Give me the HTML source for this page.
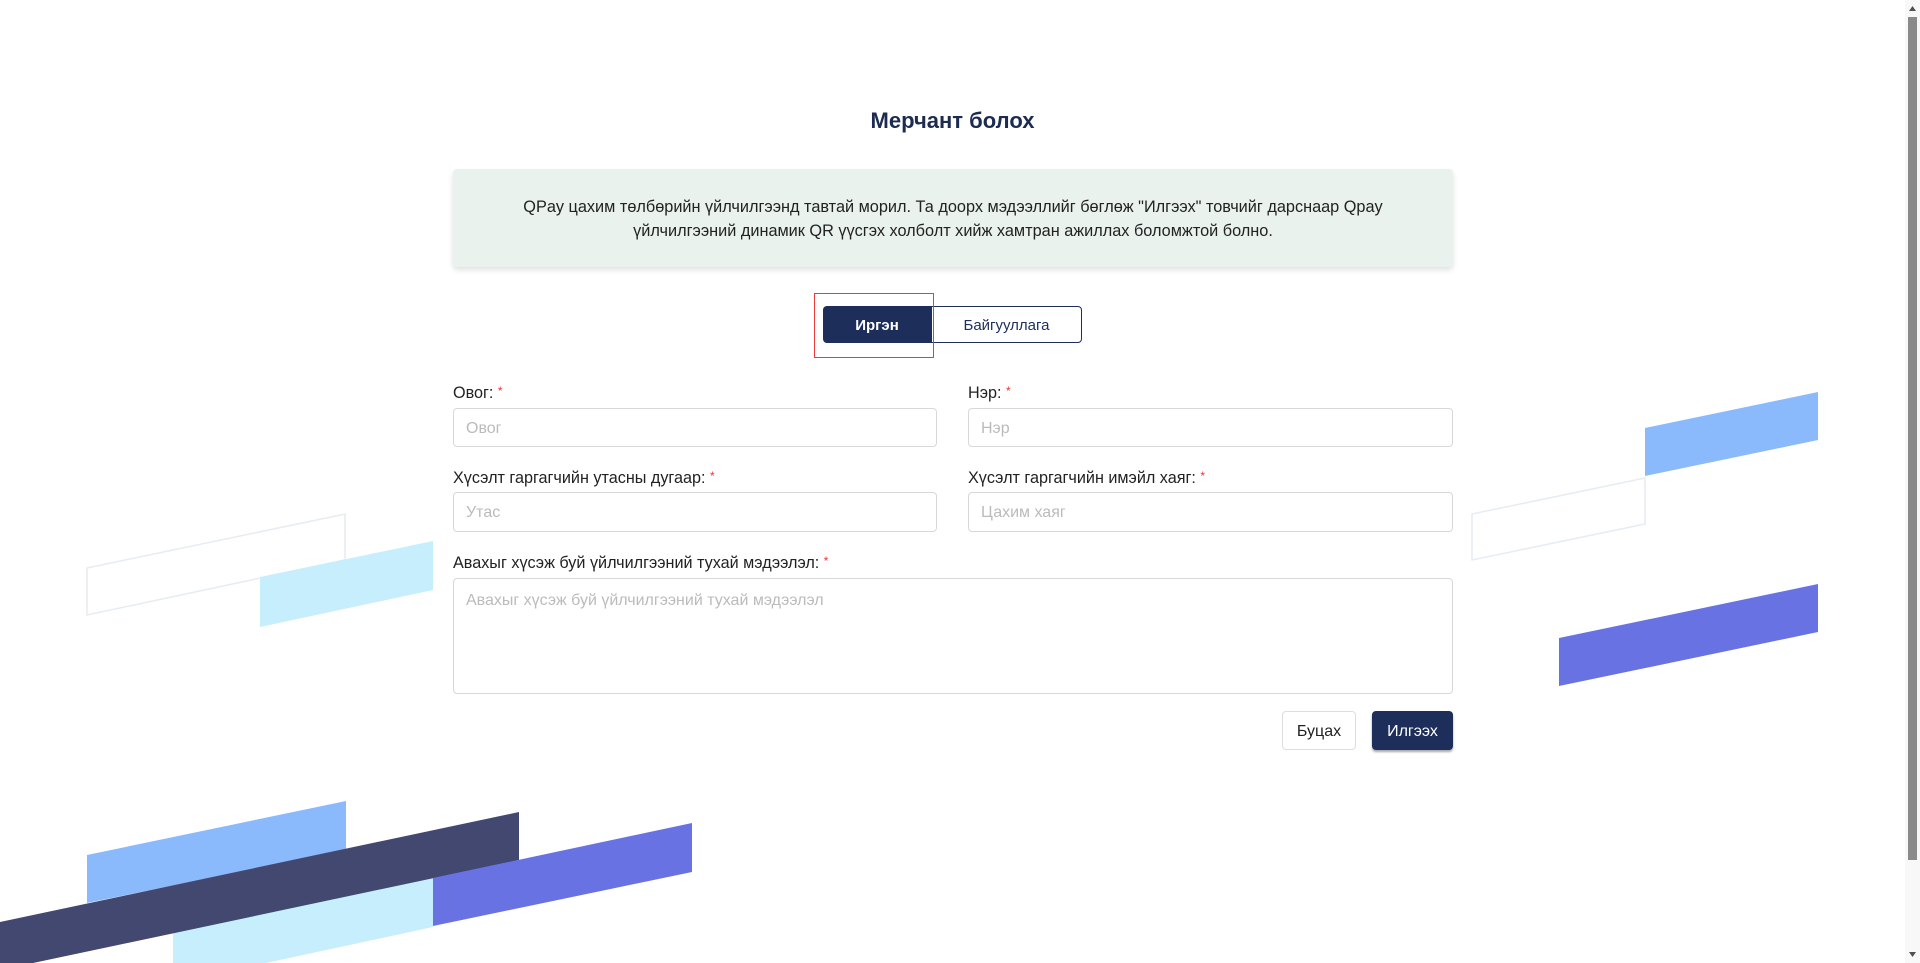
<!DOCTYPE html>
<html><head><meta charset="utf-8"><style>
*{box-sizing:border-box;margin:0;padding:0}
html,body{width:1920px;height:963px;overflow:hidden;background:#fff;font-family:"Liberation Sans",sans-serif;color:#222}
.abs{position:absolute}
h1{position:absolute;left:0;width:1905px;top:108px;text-align:center;font-size:22px;font-weight:bold;color:#1c2b50}
.info{left:453px;top:169px;width:1000px;height:98px;background:#eaf2ed;border-radius:4px;box-shadow:0 3px 6px rgba(0,0,0,.12);text-align:center;font-size:16.3px;line-height:24px;padding-top:26px;color:#222}
.tog{top:306px;height:37px;font-size:15px;display:flex;align-items:center;justify-content:center;border-radius:4px;padding-top:2px}
.lbl{font-size:16.2px;font-weight:500;color:#222}
.lbl span{color:#e33;font-size:12px;vertical-align:top}
.inp{border:1px solid #d8d8d8;border-radius:4px;font-size:16px;color:#bbb;padding:2px 12px 0;display:flex;align-items:center}
.btn{top:711px;height:39px;border-radius:4px;font-size:16px;display:flex;align-items:center;justify-content:center;padding-top:2px}
</style></head><body>
<svg class="abs" style="left:0;top:0" width="1920" height="963">
<polygon points="87,568 345,514 345,560 87,615" fill="none" stroke="#e6ecf3" stroke-width="1.5"/>
<polygon points="260,577 433,541 433,590 260,627" fill="#c6eefc"/>
<polygon points="87,855 346,801 346,850 87,903" fill="#8abafc"/>
<polygon points="173,933 433,878 433,927 173,983" fill="#c6eefc"/>
<polygon points="0,922 519,812 519,860 0,970" fill="#424870"/>
<polygon points="433,878 692,823 692,872 433,926" fill="#6872e2"/>
<polygon points="1645,428 1818,392 1818,440 1645,476" fill="#8abafc"/>
<polygon points="1472,514 1645,478 1645,524 1472,560" fill="none" stroke="#e6ecf3" stroke-width="1.5"/>
<polygon points="1559,638 1818,584 1818,632 1559,686" fill="#6872e2"/>
<rect x="1905" y="0" width="15" height="963" fill="#f8f8f8"/>
<rect x="1908" y="17" width="9" height="843" fill="#8a8a8a"/>
<polygon points="1912.5,6 1909,11 1916,11" fill="#505050"/>
<polygon points="1912.5,957 1909,952 1916,952" fill="#505050"/>
</svg>
<h1>Мерчант болох</h1>
<div class="abs info">QPay цахим төлбөрийн үйлчилгээнд тавтай морил. Та доорх мэдээллийг бөглөж "Илгээх" товчийг дарснаар Qpay<br>үйлчилгээний динамик QR үүсгэх холболт хийж хамтран ажиллах боломжтой болно.</div>
<div class="abs tog" style="left:823px;width:108px;background:#1c2e59;color:#fff;font-weight:bold;border-radius:4px 0 0 4px">Иргэн</div>
<div class="abs tog" style="left:931px;width:151px;border:1px solid #1c2e59;color:#1c2e59;border-radius:0 4px 4px 0">Байгууллага</div>
<div class="abs" style="left:814px;top:293px;width:120px;height:65px;border:1.5px solid #f03a3a"></div>

<div class="abs lbl" style="left:453px;top:384px">Овог: <span>*</span></div>
<div class="abs inp" style="left:453px;top:408px;width:484px;height:39px">Овог</div>
<div class="abs lbl" style="left:968px;top:384px">Нэр: <span>*</span></div>
<div class="abs inp" style="left:968px;top:408px;width:485px;height:39px">Нэр</div>
<div class="abs lbl" style="left:453px;top:469px">Хүсэлт гаргагчийн утасны дугаар: <span>*</span></div>
<div class="abs inp" style="left:453px;top:492px;width:484px;height:40px">Утас</div>
<div class="abs lbl" style="left:968px;top:469px">Хүсэлт гаргагчийн имэйл хаяг: <span>*</span></div>
<div class="abs inp" style="left:968px;top:492px;width:485px;height:40px">Цахим хаяг</div>
<div class="abs lbl" style="left:453px;top:554px">Авахыг хүсэж буй үйлчилгээний тухай мэдээлэл: <span>*</span></div>
<div class="abs inp" style="left:453px;top:578px;width:1000px;height:116px;align-items:flex-start;padding-top:13px">Авахыг хүсэж буй үйлчилгээний тухай мэдээлэл</div>
<div class="abs btn" style="left:1282px;width:74px;border:1px solid #ddd;color:#222">Буцах</div>
<div class="abs btn" style="left:1372px;width:81px;background:#1c2e59;color:#fff;box-shadow:0 2px 2px rgba(0,0,0,.35)">Илгээх</div>
</body></html>
